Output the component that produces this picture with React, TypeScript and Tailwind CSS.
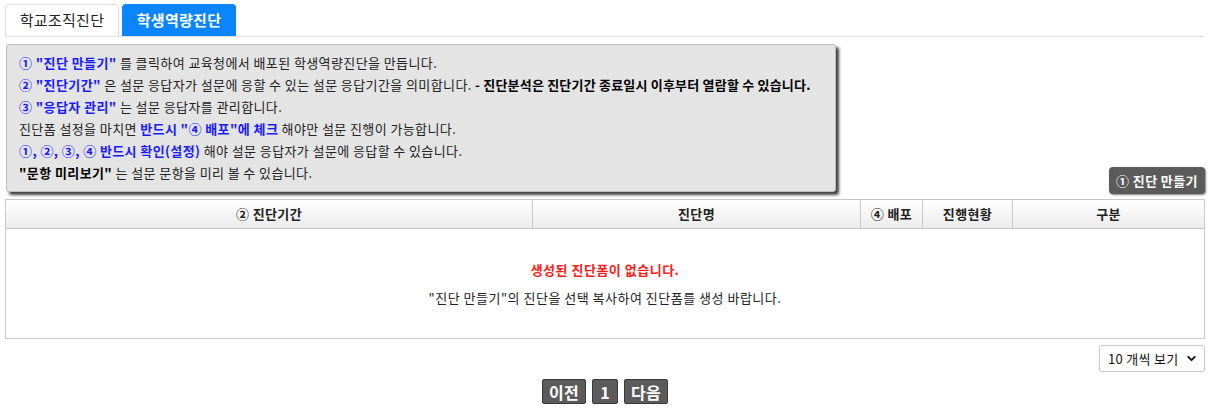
import { ChevronDown } from 'lucide-react';

const font = { fontFamily: '"Malgun Gothic", "Noto Sans CJK KR", "Noto Sans", sans-serif' };

function Tabs() {
  return (
    <div className="flex items-end gap-[3px] border-b border-[#e2e2e2] pt-1">
      <div className="flex h-8 w-[114px] items-center justify-center rounded-t-[4px] border border-b-0 border-[#e2e2e2] bg-white text-[15px] tracking-[0.3px] text-[#222]">
        학교조직진단
      </div>
      <div className="flex h-8 w-[114px] items-center justify-center rounded-t-[4px] bg-[#0a84ff] text-[15px] font-bold tracking-[0.3px] text-white">
        학생역량진단
      </div>
    </div>
  );
}

function InfoBox() {
  const blue = 'font-bold text-[#1a1aff]';
  return (
    <div className="w-[830px] whitespace-nowrap rounded-[3px] border border-[#bdbdbd] bg-[#e4e4e4] px-[12px] py-[7px] text-[13px] leading-[22px] tracking-[0.4px] text-[#222] shadow-[3px_3px_3px_rgba(0,0,0,0.75)]">
      <p>
        <span className={blue}>① "진단 만들기"</span> 를 클릭하여 교육청에서 배포된 학생역량진단을 만듭니다.
      </p>
      <p>
        <span className={blue}>② "진단기간"</span> 은 설문 응답자가 설문에 응할 수 있는 설문 응답기간을 의미합니다.{' '}
        <span className="font-bold tracking-[0.2px] text-black">- 진단분석은 진단기간 종료일시 이후부터 열람할 수 있습니다.</span>
      </p>
      <p>
        <span className={blue}>③ "응답자 관리"</span> 는 설문 응답자를 관리합니다.
      </p>
      <p>
        진단폼 설정을 마치면 <span className={blue}>반드시 "④ 배포"에 체크</span> 해야만 설문 진행이 가능합니다.
      </p>
      <p>
        <span className={blue}>①, ②, ③, ④ 반드시 확인(설정)</span> 해야 설문 응답자가 설문에 응답할 수 있습니다.
      </p>
      <p>
        <span className="font-bold text-black">"문항 미리보기"</span> 는 설문 문항을 미리 볼 수 있습니다.
      </p>
    </div>
  );
}

const columns = [
  { label: '② 진단기간', w: 'w-[527px]' },
  { label: '진단명', w: 'w-[328px]' },
  { label: '④ 배포', w: 'w-[62px]' },
  { label: '진행현황', w: 'w-[90px]' },
  { label: '구분', w: 'flex-1' },
];

function Table() {
  return (
    <div className="mt-[7px] border border-[#c8c8c8]">
      <div className="flex h-[29px] border-b border-[#c8c8c8] bg-gradient-to-b from-white to-[#ececec]">
        {columns.map((c, i) => (
          <div
            key={c.label}
            className={`${c.w} flex items-center justify-center text-[13px] font-bold tracking-[0.4px] text-[#222] ${
              i < columns.length - 1 ? 'border-r border-[#c8c8c8]' : ''
            }`}
          >
            {c.label}
          </div>
        ))}
      </div>
      <div className="flex h-[109px] flex-col items-center justify-center gap-[9px] text-[13px] tracking-[0.5px]">
        <p className="font-bold text-[#ff1a1a]">생성된 진단폼이 없습니다.</p>
        <p className="text-[#222]">"진단 만들기"의 진단을 선택 복사하여 진단폼를 생성 바랍니다.</p>
      </div>
    </div>
  );
}

export default function App() {
  return (
    <div className="min-h-[414px] bg-white pl-[5px] pr-[7px]" style={font}>
      <Tabs />
      <div className="mt-[7px] flex items-end justify-between pl-px">
        <InfoBox />
        <button className="mb-[-2px] flex h-[27px] w-[96px] items-center justify-center rounded-[4px] bg-[#5b5b5b] text-[13px] font-bold tracking-[0.4px] text-white shadow-[1px_1px_2px_rgba(0,0,0,0.5)]">
          ① 진단 만들기
        </button>
      </div>
      <div className="mt-[2px]">
        <Table />
      </div>
      <div className="mt-[6px] flex justify-end">
        <div className="flex h-[27px] w-[106px] items-center justify-between rounded-[3px] border border-[#c8c8c8] bg-white pl-[8px] pr-[6px] text-[13px] tracking-[0.3px] text-[#111]">
          <span>10 개씩 보기</span>
          <ChevronDown size={13} strokeWidth={3.5} />
        </div>
      </div>
      <div className="mt-[7px] flex justify-center gap-[6px]">
        {['이전', '1', '다음'].map((t) => (
          <div
            key={t}
            className="flex h-[25px] min-w-[26px] items-center justify-center rounded-[2px] border border-[#3a3a3a] bg-[#5b5b5b] px-[6px] text-[16px] font-bold tracking-[0.3px] text-white"
          >
            {t}
          </div>
        ))}
      </div>
    </div>
  );
}
